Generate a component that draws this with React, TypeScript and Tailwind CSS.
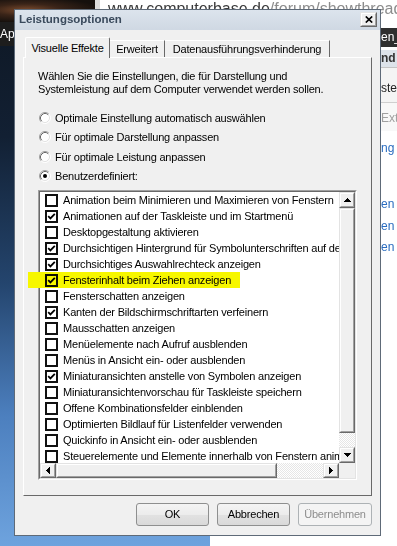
import React from "react";

const items: [string, boolean][] = [
  ["Animation beim Minimieren und Maximieren von Fenstern", false],
  ["Animationen auf der Taskleiste und im Startmenü", true],
  ["Desktopgestaltung aktivieren", false],
  ["Durchsichtigen Hintergrund für Symbolunterschriften auf dem Desktop", true],
  ["Durchsichtiges Auswahlrechteck anzeigen", true],
  ["Fensterinhalt beim Ziehen anzeigen", true],
  ["Fensterschatten anzeigen", false],
  ["Kanten der Bildschirmschriftarten verfeinern", true],
  ["Mausschatten anzeigen", false],
  ["Menüelemente nach Aufruf ausblenden", false],
  ["Menüs in Ansicht ein- oder ausblenden", false],
  ["Miniaturansichten anstelle von Symbolen anzeigen", true],
  ["Miniaturansichtenvorschau für Taskleiste speichern", false],
  ["Offene Kombinationsfelder einblenden", false],
  ["Optimierten Bildlauf für Listenfelder verwenden", false],
  ["Quickinfo in Ansicht ein- oder ausblenden", false],
  ["Steuerelemente und Elemente innerhalb von Fenstern animieren", false],
];

function Bevel({ className = "", children }: { className?: string; children?: React.ReactNode }) {
  return (
    <div className={`flex border border-t-[#e3e3e3] border-l-[#e3e3e3] border-r-[#696969] border-b-[#696969] ${className}`}>
      <div className="flex-1 flex items-center justify-center border border-t-white border-l-white border-r-[#a0a0a0] border-b-[#a0a0a0] bg-[#f0f0f0]">
        {children}
      </div>
    </div>
  );
}

function Arrow({ dir }: { dir: "up" | "down" | "left" | "right" }) {
  const d = {
    up: "M3 0h1v1h-1z M2 1h3v1h-3z M1 2h5v1h-5z M0 3h7v1h-7z",
    down: "M0 0h7v1h-7z M1 1h5v1h-5z M2 2h3v1h-3z M3 3h1v1h-1z",
    left: "M0 3h1v1h-1z M1 2h1v3h-1z M2 1h1v5h-1z M3 0h1v7h-1z",
    right: "M0 0h1v7h-1z M1 1h1v5h-1z M2 2h1v3h-1z M3 3h1v1h-1z",
  }[dir];
  const vert = dir === "up" || dir === "down";
  return (
    <svg width={vert ? 7 : 4} height={vert ? 4 : 7} shapeRendering="crispEdges">
      <path d={d} fill="#000" />
    </svg>
  );
}

function Radio({ checked }: { checked?: boolean }) {
  return (
    <svg width="12" height="12" viewBox="0 0 12 12" className="shrink-0">
      <circle cx="6" cy="6" r="5" fill="#fff" />
      <path d="M2.11 9.89 A5.5 5.5 0 0 1 9.89 2.11" stroke="#a0a0a0" fill="none" />
      <path d="M9.89 2.11 A5.5 5.5 0 0 1 2.11 9.89" stroke="#ffffff" fill="none" />
      <path d="M2.82 9.18 A4.5 4.5 0 0 1 9.18 2.82" stroke="#696969" fill="none" />
      <path d="M9.18 2.82 A4.5 4.5 0 0 1 2.82 9.18" stroke="#e3e3e3" fill="none" />
      {checked && <circle cx="6" cy="6" r="2" fill="#000" />}
    </svg>
  );
}

function Check({ on }: { on: boolean }) {
  return (
    <div className="w-[13px] h-[13px] border-2 border-[#111] bg-white shrink-0 flex items-center justify-center">
      {on && (
        <svg width="9" height="9" viewBox="0 0 9 9">
          <polyline points="1.2,4.2 3.4,6.4 7.8,1.8" stroke="#000" strokeWidth="1.8" fill="none" />
        </svg>
      )}
    </div>
  );
}

const dither =
  "bg-[image:repeating-conic-gradient(#ffffff_0%_25%,#e6e6e6_0%_50%)] bg-[length:2px_2px] bg-size-[2px_2px]";

export default function App() {
  return (
    <div className="relative w-[397px] h-[546px] overflow-hidden bg-[linear-gradient(180deg,#0e1723_0%,#122033_25%,#24456e_52%,#4c7fbe_76%,#6ea3de_100%)] font-['Liberation_Sans',Arial,sans-serif] text-black">
      {/* desktop: wallpaper fragment and label */}
      <div className="absolute left-0 top-0 w-[95px] h-[22px] bg-[radial-gradient(ellipse_at_28%_45%,#7a4a2c_0%,#3a2418_35%,#15100d_75%)]" />
      <div className="absolute left-0 top-[22px] w-[95px] h-[24px] bg-[#1d1d1d]">
        <span className="absolute left-0 top-[6px] text-white text-[12px] leading-[12px]">Apps</span>
      </div>

      {/* browser window behind */}
      <div className="absolute left-[95px] top-0 right-0 bottom-[10px] bg-white border-l-[5px] border-l-[#dcdcdc]">
        <div className="flex items-start pl-[3px]">
          <svg width="10" height="12" viewBox="0 0 10 12" className="mt-[-3px]">
            <path d="M0.5 0.5h6l3 3v8h-9z" fill="#fff" stroke="#8a8a8a" />
            <path d="M6.5 0.5v3h3" fill="none" stroke="#8a8a8a" />
          </svg>
          <div className="ml-[5px] whitespace-nowrap text-[16px] leading-[18px]">
            <span className="text-[#3a3a3a]">www.computerbase.de</span>
            <span className="text-[#8c8c8c]">/forum/showthread.php</span>
          </div>
        </div>
      </div>
      <div className="absolute left-[210px] bottom-0 right-0 h-[10px] bg-white" />

      {/* visible strip of the web page on the right */}
      <div className="absolute left-[381px] top-[28px] w-[16px] flex flex-col overflow-hidden whitespace-nowrap text-[12px]">
        <div className="h-[19px] bg-[#2f2f2f] text-white leading-[19px]">en_</div>
        <div className="h-[3px] bg-white" />
        <div className="h-[17px] bg-[#dde3ea] font-bold text-[#333] leading-[17px]">nd -</div>
        <div className="h-[1px] bg-[#c4c4c4]" />
        <div className="h-[34px] bg-[#f4f4f4] pt-[13px] leading-[14px] text-[#222]">steu</div>
        <div className="h-[1px] bg-[#cfcfcf]" />
        <div className="h-[28px] bg-[#f8f8f8] pt-[8px] leading-[14px] text-[#a0a0a0]">Ext</div>
        <div className="h-[27px] pt-[10px] leading-[14px] text-[#2a6cbf]">ng</div>
        <div className="h-[39px]" />
        <div className="h-[22px] leading-[14px] text-[#2a6cbf]">en</div>
        <div className="h-[21px] leading-[14px] text-[#2a6cbf]">en</div>
        <div className="h-[21px] leading-[14px] text-[#2a6cbf]">en</div>
      </div>

      {/* dialog */}
      <div className="absolute left-[14px] top-[9px] w-[367px] h-[527px] border border-[#5e6a78] bg-[#f0f0f0] flex flex-col text-[11px] tracking-[-0.2px]">
        <div className="relative h-[20px] shrink-0 bg-[linear-gradient(180deg,#dce4ed,#cfd8e3)] flex items-center pl-[4px]">
          <span className="font-bold text-[11.5px] tracking-normal text-[#3a4a5c]">Leistungsoptionen</span>
          <Bevel className="absolute right-[3px] top-[2px] w-[17px] h-[15px]">
            <svg width="8" height="7" viewBox="0 0 8 7">
              <path d="M0.8 0.5 L7.2 6.5 M7.2 0.5 L0.8 6.5" stroke="#000" strokeWidth="1.7" />
            </svg>
          </Bevel>
        </div>

        <div className="flex-1 flex flex-col px-[8px] pt-[7px]">
          {/* tabs */}
          <div className="h-[20px] flex items-end pl-[2px]">
            <div className="relative z-10 -mb-[1px] h-[21px] w-[85px] bg-[#f0f0f0] border-t border-l border-r border-t-white border-l-white border-r-[#696969] rounded-t-[2px] flex items-center justify-center">
              Visuelle Effekte
            </div>
            <div className="h-[17px] w-[55px] border-t border-r border-t-white border-r-[#696969] flex items-center justify-center">
              Erweitert
            </div>
            <div className="h-[17px] w-[165px] border-t border-r border-t-white border-r-[#696969] flex items-center justify-center">
              Datenausführungsverhinderung
            </div>
          </div>

          {/* tab page */}
          <div className="h-[439px] border border-t-white border-l-white border-r-[#696969] border-b-[#696969] pl-[14px] pt-[12px] flex flex-col">
            <p className="leading-[13px]">
              Wählen Sie die Einstellungen, die für Darstellung und
              <br />
              Systemleistung auf dem Computer verwendet werden sollen.
            </p>

            <div className="mt-[12px] flex flex-col">
              {[
                ["Optimale Einstellung automatisch auswählen", false],
                ["Für optimale Darstellung anpassen", false],
                ["Für optimale Leistung anpassen", false],
                ["Benutzerdefiniert:", true],
              ].map(([label, on]) => (
                <div key={label as string} className="h-[19.5px] flex items-center pl-[1px]">
                  <Radio checked={on as boolean} />
                  <span className="ml-[4px]">{label as string}</span>
                </div>
              ))}
            </div>

            {/* list box */}
            <div className="mt-[4px] w-[319px] h-[290px] flex border border-t-[#a0a0a0] border-l-[#a0a0a0] border-r-white border-b-white">
              <div className="flex-1 flex flex-col border border-t-[#696969] border-l-[#696969] border-r-[#e3e3e3] border-b-[#e3e3e3] bg-white">
                <div className="h-[271px] flex">
                  <div className="w-[299px] overflow-hidden">
                    {items.map(([label, on]) => (
                      <div key={label} className="h-[16px] flex items-center whitespace-nowrap">
                        <div className="ml-[5px]">
                          <Check on={on} />
                        </div>
                        <span className="ml-[5px]">{label}</span>
                      </div>
                    ))}
                  </div>
                  <div className="w-[16px] flex flex-col">
                    <Bevel className="h-[16px]">
                      <Arrow dir="up" />
                    </Bevel>
                    <Bevel className="h-[225px]" />
                    <div className={`flex-1 ${dither}`} />
                    <Bevel className="h-[16px]">
                      <Arrow dir="down" />
                    </Bevel>
                  </div>
                </div>
                <div className="flex-1 flex">
                  <Bevel className="w-[16px]">
                    <Arrow dir="left" />
                  </Bevel>
                  <Bevel className="w-[221px]" />
                  <div className={`flex-1 ${dither}`} />
                  <Bevel className="w-[16px]">
                    <Arrow dir="right" />
                  </Bevel>
                  <div className="w-[16px] bg-[#f0f0f0]" />
                </div>
              </div>
            </div>
          </div>

          {/* buttons */}
          <div className="mt-[7px] flex justify-end gap-[8px]">
            <div className="w-[73px] h-[23px] rounded-[3px] border border-[#8e8f8f] bg-[linear-gradient(180deg,#f4f4f4_0%,#ececec_50%,#e2e2e2_51%,#d9d9d9_100%)] flex items-center justify-center">
              OK
            </div>
            <div className="w-[73px] h-[23px] rounded-[3px] border border-[#8e8f8f] bg-[linear-gradient(180deg,#f4f4f4_0%,#ececec_50%,#e2e2e2_51%,#d9d9d9_100%)] flex items-center justify-center">
              Abbrechen
            </div>
            <div className="w-[74px] h-[23px] rounded-[3px] border border-[#adb2b5] bg-[#f4f4f4] text-[#8d8d8d] flex items-center justify-center">
              Übernehmen
            </div>
          </div>
        </div>
      </div>

      {/* yellow highlighter mark */}
      <div className="absolute left-[28px] top-[272px] w-[14px] h-[16px] bg-[#f7f700]" />
      <div className="absolute left-[42px] top-[272px] w-[198px] h-[16px] bg-[#f7f700] mix-blend-multiply" />
    </div>
  );
}
